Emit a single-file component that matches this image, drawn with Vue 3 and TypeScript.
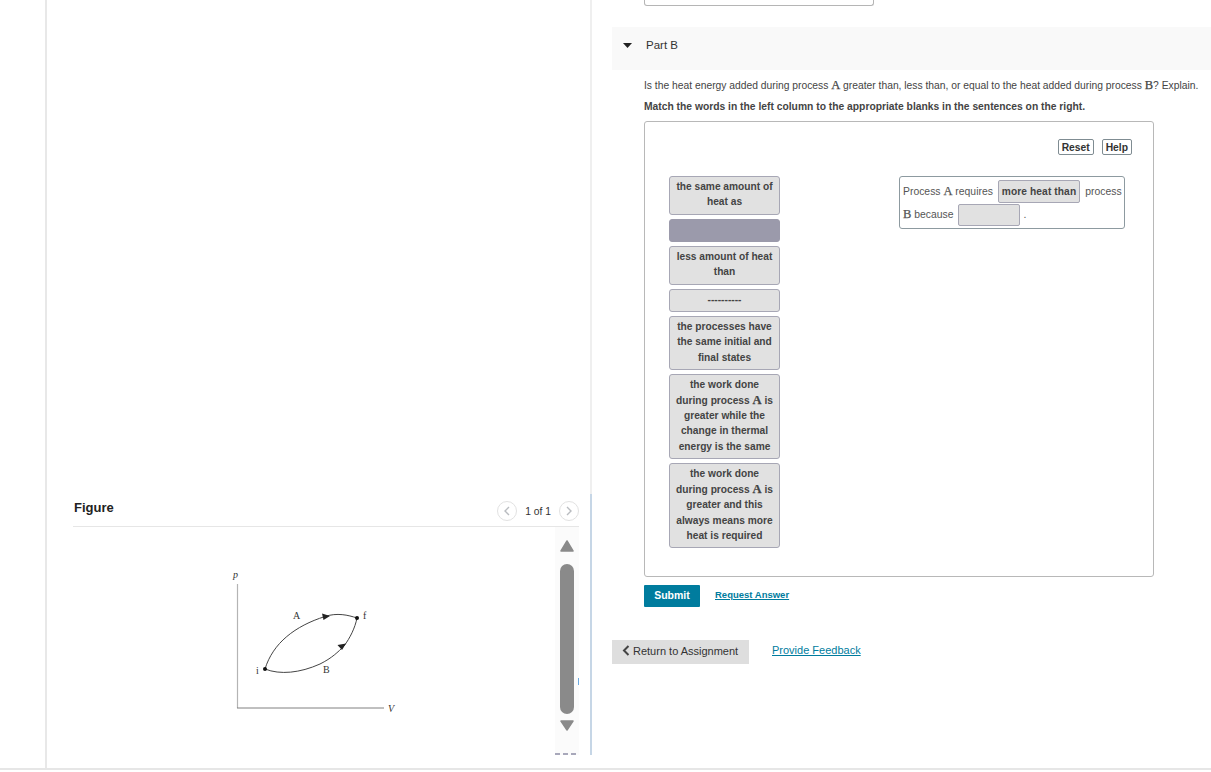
<script setup lang="ts">
interface Token {
  lines: string[];
  empty?: boolean;
}
const tokens: Token[] = [
  { lines: ['the same amount of', 'heat as'] },
  { lines: [], empty: true },
  { lines: ['less amount of heat', 'than'] },
  { lines: ['----------'] },
  { lines: ['the processes have', 'the same initial and', 'final states'] },
  { lines: ['the work done', 'during process @ is', 'greater while the', 'change in thermal', 'energy is the same'] },
  { lines: ['the work done', 'during process @ is', 'greater and this', 'always means more', 'heat is required'] },
];
function parts(line: string): string[] {
  return line.split('@');
}
</script>

<template>
  <div class="page">
    <main class="main">
      <div class="gutter"></div>
      <section class="left">
        <header class="fig-head">
          <h2 class="fig-title">Figure</h2>
          <div class="pager">
            <span class="circle">
              <svg width="8" height="10" viewBox="0 0 8 10"><path d="M6 1 2 5l4 4" fill="none" stroke="#b9bcc0" stroke-width="1.4" /></svg>
            </span>
            <span class="count">1 of 1</span>
            <span class="circle">
              <svg width="8" height="10" viewBox="0 0 8 10"><path d="M2 1l4 4-4 4" fill="none" stroke="#b9bcc0" stroke-width="1.4" /></svg>
            </span>
          </div>
        </header>
        <div class="fig-body">
          <div class="fig-area">
            <svg class="diagram" width="482" height="228" viewBox="73 527 482 228">
              <path d="M237.5 584V708" fill="none" stroke="#b4b4b4" stroke-width="1.2" />
              <path d="M237 708H384" fill="none" stroke="#808080" stroke-width="1" />
              <path d="M265 669C273 643 295 626 325 616.500C337 612.500 348 615 357 618" fill="none" stroke="#444" stroke-width="1" />
              <path d="M265 669C280 675 300 673 320 664C332 658 338 652 344 646C350 638 355 628 357 618" fill="none" stroke="#444" stroke-width="1" />
              <path d="M322 613.500 330 616 323.500 620Z" fill="#222" />
              <path d="M337.500 645 346 643.500 342 650Z" fill="#222" />
              <circle cx="265" cy="669" r="2" fill="#111" />
              <circle cx="357" cy="618" r="2" fill="#111" />
              <text class="lbl ital" x="233" y="578">p</text>
              <text class="lbl ital" x="388" y="712">V</text>
              <text class="lbl" x="293" y="619">A</text>
              <text class="lbl" x="323" y="673">B</text>
              <text class="lbl" x="256" y="674">i</text>
              <text class="lbl" x="363" y="619">f</text>
            </svg>
          </div>
          <div class="track">
            <svg width="14" height="12" viewBox="0 0 14 12"><path d="M7 1 13 11H1Z" fill="#8a8a8a" stroke="#8a8a8a" stroke-width="1.500" stroke-linejoin="round" /></svg>
            <div class="thumb"></div>
            <svg width="14" height="11" viewBox="0 0 14 11"><path d="M1 1H13L7 10Z" fill="#8a8a8a" stroke="#8a8a8a" stroke-width="1.500" stroke-linejoin="round" /></svg>
            <span class="tick"></span>
            <span class="dashes"></span>
          </div>
        </div>
      </section>
      <div class="divider">
        <div class="div-top"></div>
        <div class="div-blue"></div>
      </div>
      <section class="right">
        <div class="prev-card"></div>
        <div class="part-bar">
          <svg width="9" height="5" viewBox="0 0 9 5"><path d="M0 0H9L4.500 5Z" fill="#222" /></svg>
          <span class="part-label">Part B</span>
        </div>
        <div class="content">
          <p class="question">Is the heat energy added during process <span class="math">A</span> greater than, less than, or equal to the heat added during process <span class="math">B</span>? Explain.</p>
          <p class="instruct">Match the words in the left column to the appropriate blanks in the sentences on the right.</p>
          <div class="dnd">
            <div class="dnd-tools">
              <button class="tool">Reset</button>
              <button class="tool">Help</button>
            </div>
            <div class="dnd-cols">
              <div class="tokens">
                <div v-for="(t, i) in tokens" :key="i" class="token" :class="{ empty: t.empty }">
                  <div v-for="(l, j) in t.lines" :key="j">
                    <template v-for="(p, k) in parts(l)" :key="k"><span v-if="k > 0" class="math">A</span>{{ p }}</template>
                  </div>
                </div>
              </div>
              <div class="sentence">
                <div class="s-line">Process <span class="math">A</span> requires <span class="token inline filled">more heat than</span> <span class="after">process</span></div>
                <div class="s-line"><span class="math">B</span> because <span class="token inline blank"></span> <span class="dot">.</span></div>
              </div>
            </div>
          </div>
          <div class="actions">
            <button class="submit">Submit</button>
            <a class="req" href="#">Request Answer</a>
          </div>
        </div>
        <div class="footer-row">
          <button class="back">
            <svg width="8" height="11" viewBox="0 0 8 11"><path d="M6.500 1 2 5.500 6.500 10" fill="none" stroke="#444" stroke-width="2" /></svg>
            Return to Assignment
          </button>
          <a class="feedback" href="#">Provide Feedback</a>
        </div>
      </section>
    </main>
    <div class="foot-line"></div>
  </div>
</template>

<style>
html, body { margin: 0; background: #fff; }
</style>

<style scoped>
.page {
  width: 1211px;
  height: 772px;
  overflow: hidden;
  background: #fff;
  display: flex;
  flex-direction: column;
  font-family: "Liberation Sans", Arial, sans-serif;
  color: #333;
}
.main { height: 768px; display: flex; flex: none; }
.gutter { width: 45px; flex: none; border-right: 2px solid #e8e8e8; }
.foot-line { height: 2px; background: #e6e6e6; }

.left {
  width: 506px;
  flex: none;
  padding: 0 11px 13px 26px;
  display: flex;
  flex-direction: column;
  justify-content: flex-end;
}
.fig-head {
  height: 29px;
  display: flex;
  justify-content: space-between;
  border-bottom: 1px solid #e6e6e6;
}
.fig-title { margin: 2px 0 0 1px; font-size: 13px; line-height: 18px; font-weight: 700; color: #222; }
.pager { display: flex; align-items: center; height: 22px; margin: 3px 0 0; gap: 8px; }
.circle {
  width: 20px;
  height: 20px;
  border: 1px solid #e2e2e2;
  border-radius: 50%;
  display: flex;
  align-items: center;
  justify-content: center;
  box-sizing: border-box;
}
.count { font-size: 10.300px; color: #333; margin-top: 1px; }
.fig-body { height: 228px; display: flex; }
.fig-area { flex: 1; }
.diagram { display: block; }
.lbl { font-family: "Liberation Serif", serif; font-size: 10px; fill: #333; }
.ital { font-style: italic; }
.track {
  width: 24px;
  flex: none;
  background: #fbfbfb;
  display: flex;
  flex-direction: column;
  align-items: center;
  padding-top: 13px;
  box-sizing: border-box;
  position: relative;
}
.thumb { width: 14px; height: 150px; background: #8a8a8a; border-radius: 7px; margin: 12px 0 6px; }
.tick { position: absolute; right: 0; top: 151px; width: 1px; height: 7px; background: #6aa9e0; }
.dashes {
  position: absolute;
  left: 0;
  right: 0;
  bottom: 0;
  height: 2px;
  opacity: 0.5;
  background: repeating-linear-gradient(90deg, #55557a 0 5px, transparent 5px 8px);
}

.divider { width: 2px; flex: none; display: flex; flex-direction: column; }
.div-top { height: 494px; background: #efefef; }
.div-blue { height: 261px; background: #c6d6e6; }

.right { width: 619px; flex: none; padding-left: 20px; box-sizing: border-box; }
.prev-card {
  width: 228px;
  height: 5px;
  margin-left: 32px;
  border: 1px solid #b5b5b5;
  border-top: 0;
  border-radius: 0 0 3px 3px;
}
.part-bar {
  height: 43px;
  margin-top: 21px;
  background: #f9f9f9;
  display: flex;
  align-items: center;
  padding: 0 0 7px 11px;
  box-sizing: border-box;
  gap: 14px;
}
.part-label { font-size: 11.500px; color: #333; }
.content { padding-left: 32px; }
.question { margin: 9px 0 0; font-size: 10.300px; line-height: 13px; color: #444; white-space: nowrap; }
.instruct { margin: 8px 0 0; font-size: 10.300px; line-height: 13px; font-weight: 700; color: #444; white-space: nowrap; }
.math {
  font-family: "Liberation Serif", serif;
  font-size: 12.500px;
  line-height: 1;
  -webkit-text-stroke: 0.25px currentColor;
}
.dnd {
  width: 508px;
  height: 454px;
  margin-top: 8px;
  border: 1px solid #b8b8b8;
  border-radius: 3px;
}
.dnd-tools { display: flex; justify-content: flex-end; gap: 8px; padding: 17px 21px 0 0; }
.tool {
  height: 16px;
  padding: 1px 3px 0;
  font: 700 10.300px "Liberation Sans", Arial, sans-serif;
  color: #333;
  background: #fff;
  border: 1px solid #7f8c92;
  border-radius: 2px;
}
.dnd-cols { display: flex; margin-top: 21px; align-items: flex-start; }
.tokens { width: 111px; margin-left: 24px; display: flex; flex-direction: column; gap: 4px; }
.token {
  box-sizing: border-box;
  background: #e1e1e1;
  border: 1px solid #a7a7b5;
  border-radius: 3px;
  padding: 2px 2px 4px;
  font-size: 10.200px;
  line-height: 15.400px;
  font-weight: 700;
  color: #444;
  text-align: center;
}
.token.empty { height: 23px; background: #9b9aab; border-color: #9b9aab; }
.sentence {
  width: 226px;
  height: 53px;
  margin-left: 119px;
  box-sizing: border-box;
  border: 1px solid #8d9aa0;
  border-radius: 3px;
  padding: 3px 3px 0;
  font-size: 10.400px;
  color: #555;
}
.s-line { display: flex; align-items: center; white-space: pre; height: 23px; }
.token.inline { display: inline-block; height: 23px; line-height: 21px; padding: 0 3px; margin-left: 2px; border-radius: 2px; letter-spacing: 0.1px; }
.token.filled { margin-right: 5px; }
.token.blank { width: 62px; height: 22px; }
.dot { margin-left: 3px; }
.actions { display: flex; align-items: center; margin-top: 8px; gap: 15px; }
.submit {
  width: 56px;
  height: 22px;
  padding: 0 0 2px;
  background: #007c9e;
  color: #fff;
  border: 0;
  border-radius: 1px;
  font: 700 10.500px "Liberation Sans", Arial, sans-serif;
}
.req { font-size: 9.500px; font-weight: 700; color: #007c9e; margin-top: -3px; }
.footer-row { display: flex; align-items: center; margin-top: 33px; gap: 23px; }
.back {
  width: 137px;
  height: 24px;
  background: #dedede;
  border: 0;
  color: #333;
  font: 11px "Liberation Sans", Arial, sans-serif;
  display: flex;
  align-items: center;
  gap: 3px;
  padding: 0 0 3px 10px;
}
.feedback { font-size: 11px; color: #007c9e; margin-top: -5px; }
</style>
